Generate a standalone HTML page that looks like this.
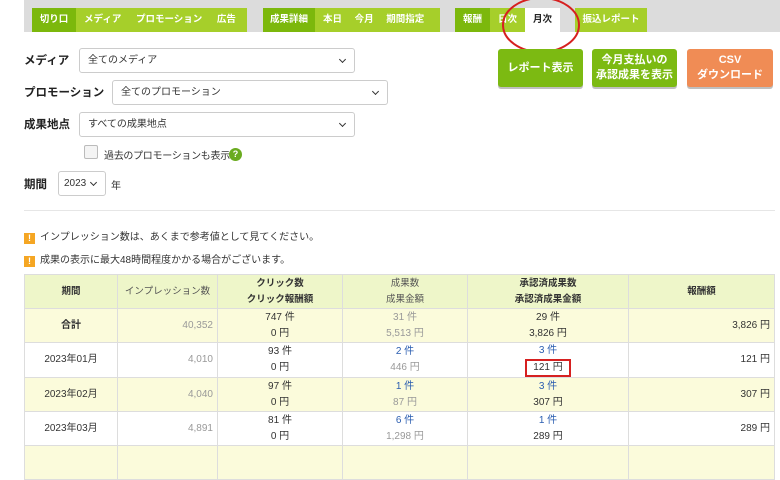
<!DOCTYPE html>
<html><head><meta charset="utf-8"><style>
*{box-sizing:border-box;margin:0;padding:0}
body{width:780px;height:447px;overflow:hidden;background:#fff;font-family:"Liberation Sans","Noto Sans CJK JP",sans-serif;font-size:10px;color:#333;position:relative}
.a{position:absolute}
.bar{left:24px;top:0;width:756px;height:32px;background:#dcdcdc}
.tab{position:absolute;top:8px;height:24px;line-height:24px;color:#fff;font-weight:bold;font-size:9.5px;text-align:center;background:#a6cf2a}
.dk{background:#7cb80c}
.lbl{font-weight:bold;font-size:11.5px;color:#222}
.sel{position:absolute;height:25px;border:1px solid #ccc;border-radius:3px;background:#fff;font-size:10px;line-height:23px;padding-left:8px;color:#333}
.sel:after{content:"";position:absolute;right:9px;top:8px;width:4px;height:4px;border-right:1.5px solid #333;border-bottom:1.5px solid #333;transform:rotate(45deg)}
.btn{position:absolute;top:49px;height:38px;border-radius:3px;color:#fff;font-weight:bold;font-size:11px;text-align:center;box-shadow:0 2px 0 rgba(0,0,0,.25)}
table{position:absolute;left:24px;top:274px;width:751px;border-collapse:collapse;font-size:10px}
td,th{border:1px solid #ddd;text-align:center;line-height:16px}
th{background:#eef6c9;height:34px;font-size:9.5px}
td{height:34px}
.y td{background:#fbfbdb}
.r{text-align:right;padding-right:4px}
.g{color:#999}
.b{color:#2a5db0}
.ex{display:inline-block;width:11px;height:11px;background:#f5a623;color:#fff;font-size:9px;line-height:11px;text-align:center;font-weight:bold;margin-right:5px;vertical-align:-1px}
</style></head><body>
<div class="a bar"></div>
<div class="tab dk" style="left:32px;width:44px">切り口</div>
<div class="tab" style="left:76px;width:171px;text-align:left;padding-left:8px;word-spacing:12px">メディア プロモーション 広告</div>
<div class="tab dk" style="left:263px;width:52px">成果詳細</div>
<div class="tab" style="left:315px;width:125px;text-align:left;padding-left:8px;word-spacing:10px">本日 今月 期間指定</div>
<div class="tab dk" style="left:455px;width:35px">報酬</div>
<div class="tab" style="left:490px;width:35px">日次</div>
<div class="tab" style="left:525px;width:35px;background:#fff;color:#222">月次</div>
<div class="tab" style="left:575px;width:72px">振込レポート</div>
<svg class="a" style="left:500px;top:0" width="84" height="58"><ellipse cx="41" cy="25" rx="38" ry="27" fill="none" stroke="#d62020" stroke-width="2"/></svg>

<div class="a lbl" style="left:24px;top:52px">メディア</div>
<div class="sel" style="left:79px;top:48px;width:276px">全てのメディア</div>
<div class="a lbl" style="left:24px;top:84px">プロモーション</div>
<div class="sel" style="left:112px;top:80px;width:276px">全てのプロモーション</div>
<div class="a lbl" style="left:24px;top:116px">成果地点</div>
<div class="sel" style="left:79px;top:112px;width:276px">すべての成果地点</div>
<div class="a" style="left:84px;top:145px;width:14px;height:14px;border:1px solid #bbb;border-radius:2px;background:#f4f4f4"></div>
<div class="a" style="left:104px;top:147px;font-size:10px;letter-spacing:-0.3px">過去のプロモーションも表示</div>
<div class="a" style="left:229px;top:148px;width:13px;height:13px;border-radius:50%;background:#6aab1f;color:#fff;font-size:9px;font-weight:bold;text-align:center;line-height:13px">?</div>
<div class="a lbl" style="left:24px;top:176px">期間</div>
<div class="sel" style="left:58px;top:171px;width:48px;padding-left:5px">2023</div>
<div class="a" style="left:111px;top:177px;font-size:10px">年</div>

<div class="btn" style="left:498px;width:85px;background:#7cba12;line-height:38px">レポート表示</div>
<div class="btn" style="left:592px;width:85px;background:#7cba12;line-height:15px;padding-top:4px">今月支払いの<br>承認成果を表示</div>
<div class="btn" style="left:687px;width:86px;background:#f08c55;line-height:15px;padding-top:4px">CSV<br>ダウンロード</div>

<div class="a" style="left:24px;top:210px;width:751px;height:1px;background:#e6e6e6"></div>
<div class="a" style="left:24px;top:228px;font-size:10px"><span class="ex">!</span>インプレッション数は、あくまで参考値として見てください。</div>
<div class="a" style="left:24px;top:251px;font-size:10px"><span class="ex">!</span>成果の表示に最大48時間程度かかる場合がございます。</div>

<table>
<tr><th style="width:93px">期間</th><th style="width:100px;font-weight:normal;color:#555">インプレッション数</th><th style="width:125px">クリック数<br>クリック報酬額</th><th style="width:125px;font-weight:normal;color:#555">成果数<br>成果金額</th><th style="width:161px">承認済成果数<br>承認済成果金額</th><th>報酬額</th></tr>
<tr class="y"><td><b>合計</b></td><td class="r g">40,352</td><td>747 件<br>0 円</td><td class="g">31 件<br>5,513 円</td><td>29 件<br>3,826 円</td><td class="r">3,826 円</td></tr>
<tr><td>2023年01月</td><td class="r g">4,010</td><td>93 件<br>0 円</td><td><span class="b">2 件</span><br><span class="g">446 円</span></td><td><span class="b">3 件</span><br><span style="display:inline-block;border:2px solid #d62020;padding:0 6px;line-height:14px">121 円</span></td><td class="r">121 円</td></tr>
<tr class="y"><td>2023年02月</td><td class="r g">4,040</td><td>97 件<br>0 円</td><td><span class="b">1 件</span><br><span class="g">87 円</span></td><td><span class="b">3 件</span><br>307 円</td><td class="r">307 円</td></tr>
<tr><td>2023年03月</td><td class="r g">4,891</td><td>81 件<br>0 円</td><td><span class="b">6 件</span><br><span class="g">1,298 円</span></td><td><span class="b">1 件</span><br>289 円</td><td class="r">289 円</td></tr>
<tr class="y"><td>&nbsp;</td><td></td><td></td><td></td><td></td><td></td></tr>
</table>
</body></html>
